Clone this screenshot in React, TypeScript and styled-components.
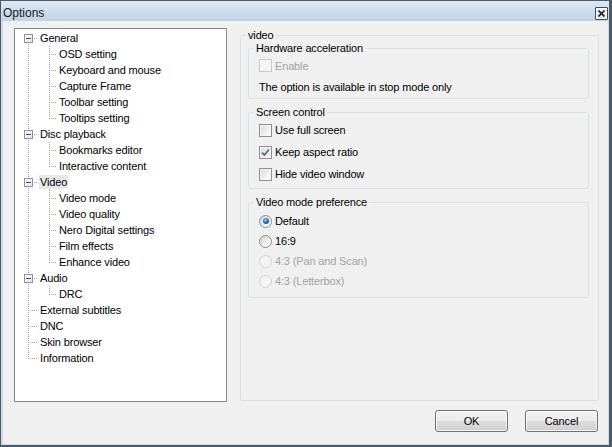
import React from "react";
import styled, { createGlobalStyle } from "styled-components";

const GlobalStyle = createGlobalStyle`
  html, body {
    margin: 0;
    padding: 0;
    background: #fff;
  }
  body {
    font-family: "Liberation Sans", Arial, sans-serif;
    font-size: 11px;
    letter-spacing: -0.15px;
    color: #000;
  }
  * {
    box-sizing: border-box;
  }
`;

const Window = styled.div`
  width: 612px;
  height: 447px;
  display: flex;
  flex-direction: column;
  background: #cedbe9;
  border-style: solid;
  border-color: #4f5a67;
  border-width: 1px 3px 2px 1px;
`;

const TitleBar = styled.div`
  height: 20px;
  flex: none;
  display: flex;
  align-items: center;
  justify-content: space-between;
  padding: 4px 1px 0 2px;
  background: linear-gradient(to bottom, #dde8f3 0%, #cddcec 55%, #c2d3e5 100%);
`;

const Title = styled.span`
  font-size: 12px;
  line-height: 16px;
  letter-spacing: 0;
  color: #1b1b1b;
`;

const CloseButton = styled.span`
  width: 13px;
  height: 13px;
  display: flex;
  align-items: center;
  justify-content: center;
  border: 1px solid #3f4a58;
  border-radius: 1px;
  background: linear-gradient(to bottom, #f7f9fb, #d9e2ec);
  box-shadow: inset 0 0 0 1px #fff;
`;

const Body = styled.div`
  flex: 1;
  display: flex;
  flex-direction: column;
  margin: 0 1px 1px 2px;
  padding: 7px 9px 12px 11px;
  background: #f0f0f0;
`;

const Main = styled.div`
  flex: 1;
  display: flex;
  gap: 13px;
`;

/* ---------- tree ---------- */

const TreeBox = styled.div`
  width: 213px;
  flex: none;
  padding-top: 1px;
  background: #fff;
  border: 1px solid #828790;
`;

const TreeRow = styled.div`
  height: 16px;
  display: flex;
  align-items: center;
`;

type Line = "full" | "top" | "bottom" | "none";

const dotV = "repeating-linear-gradient(to bottom, #a3a3a3 0 1px, transparent 1px 2px)";
const dotH = "repeating-linear-gradient(to right, #a3a3a3 0 1px, transparent 1px 2px)";

const guideLayers = (w: number, at: number, line: Line, branch?: boolean) => {
  const layers: string[] = [];
  if (line === "full") layers.push(`${dotV} ${at}px 0 / 1px 16px no-repeat`);
  if (line === "top") layers.push(`${dotV} ${at}px 0 / 1px 9px no-repeat`);
  if (line === "bottom") layers.push(`${dotV} ${at}px 8px / 1px 8px no-repeat`);
  if (branch) layers.push(`${dotH} ${at}px 8px / ${w - at}px 1px no-repeat`);
  return layers.length ? layers.join(", ") : "none";
};

const Guide = styled.span<{ $w: number; $at: number; $line: Line; $branch?: boolean }>`
  flex: none;
  align-self: stretch;
  width: ${(p) => p.$w}px;
  display: flex;
  align-items: flex-start;
  padding: 4px 0 0 ${(p) => p.$at - 4}px;
  background: ${(p) => guideLayers(p.$w, p.$at, p.$line, p.$branch)};
`;

const Expander = styled.span`
  width: 9px;
  height: 9px;
  display: flex;
  align-items: center;
  justify-content: center;
  border: 1px solid #919191;
  background: linear-gradient(135deg, #ffffff 0%, #e4e4e4 100%);

  &::before {
    content: "";
    width: 5px;
    height: 1px;
    background: #2b4c88;
  }
`;

const NodeLabel = styled.span<{ $selected?: boolean }>`
  margin-left: 1px;
  padding: 0 1px;
  line-height: 14px;
  white-space: nowrap;
  background: ${(p) => (p.$selected ? "#e8e8e8" : "transparent")};
`;

/* ---------- options panel ---------- */

const GroupBox = styled.fieldset<{ $outer?: boolean; $pt?: number; $pb?: number }>`
  margin: ${(p) => (p.$outer ? "1px 0" : "0")};
  min-width: 0;
  flex: ${(p) => (p.$outer ? "1" : "none")};
  border: 1px solid #d5dfe5;
  border-radius: 3px;
  padding: ${(p) => `${p.$pt ?? 0}px ${p.$outer ? 9 : 8}px ${p.$pb ?? 0}px ${p.$outer ? 7 : 10}px`};
`;

const Caption = styled.legend<{ $inset: number }>`
  margin-left: ${(p) => p.$inset}px;
  padding: 0 2px;
  font-size: 11px;
  line-height: 13px;
`;

const Stack = styled.div`
  display: flex;
  flex-direction: column;
  gap: 7px;
`;

const OptionRow = styled.div<{ $h: number; $disabled?: boolean }>`
  height: ${(p) => p.$h}px;
  display: flex;
  align-items: center;
  gap: 3px;
  white-space: nowrap;
  color: ${(p) => (p.$disabled ? "#a2a2a2" : "#000")};
`;

const CheckBox = styled.span<{ $disabled?: boolean }>`
  width: 13px;
  height: 13px;
  flex: none;
  display: flex;
  align-items: center;
  justify-content: center;
  border: 1px solid ${(p) => (p.$disabled ? "#cacaca" : "#8e8f8f")};
  background: ${(p) =>
    p.$disabled ? "#f5f5f5" : "linear-gradient(135deg, #d9d9d9 0%, #eeeeee 55%, #ffffff 100%)"};
  box-shadow: inset 0 0 0 1px ${(p) => (p.$disabled ? "#f5f5f5" : "#f4f4f4")};
`;

const Radio = styled.span<{ $checked?: boolean; $disabled?: boolean }>`
  width: 13px;
  height: 13px;
  flex: none;
  display: flex;
  align-items: center;
  justify-content: center;
  border-radius: 50%;
  border: 1px solid ${(p) => (p.$disabled ? "#d0d0d0" : "#8c8c8c")};
  background: ${(p) =>
    p.$disabled ? "#f3f3f3" : "linear-gradient(135deg, #d2d2d2 0%, #f0f0f0 60%, #ffffff 100%)"};

  &::after {
    content: "";
    display: ${(p) => (p.$checked ? "block" : "none")};
    width: 6px;
    height: 6px;
    border-radius: 50%;
    background: radial-gradient(circle at 40% 35%, #8fd3fb 0%, #1a7ac8 45%, #0a3f78 100%);
  }
`;

/* ---------- buttons ---------- */

const ButtonRow = styled.div`
  display: flex;
  justify-content: flex-end;
  gap: 17px;
  margin: 8px 1px 0 0;
`;

const Button = styled.button`
  width: 73px;
  height: 22px;
  padding: 0;
  font-family: inherit;
  font-size: 11px;
  letter-spacing: inherit;
  color: #000;
  border: 1px solid #707070;
  border-radius: 3px;
  background: linear-gradient(to bottom, #f2f2f2 0%, #ebebeb 50%, #dddddd 51%, #cfcfcf 100%);
  box-shadow: inset 0 0 0 1px rgba(255, 255, 255, 0.75);
`;

type Node = { label: string; selected?: boolean; children?: string[] };

const tree: Node[] = [
  {
    label: "General",
    children: ["OSD setting", "Keyboard and mouse", "Capture Frame", "Toolbar setting", "Tooltips setting"],
  },
  { label: "Disc playback", children: ["Bookmarks editor", "Interactive content"] },
  {
    label: "Video",
    selected: true,
    children: ["Video mode", "Video quality", "Nero Digital settings", "Film effects", "Enhance video"],
  },
  { label: "Audio", children: ["DRC"] },
  { label: "External subtitles" },
  { label: "DNC" },
  { label: "Skin browser" },
  { label: "Information" },
];

const Check = () => (
  <svg width="9" height="9" viewBox="0 0 9 9">
    <path d="M1 4.6 L3.4 7 L8 1.4" fill="none" stroke="#4b5f8d" strokeWidth="1.6" />
  </svg>
);

const OptionsTree = () => (
  <TreeBox>
    {tree.map((node, i) => {
      const last = i === tree.length - 1;
      const line: Line = i === 0 ? "bottom" : last ? "top" : "full";
      return (
        <React.Fragment key={node.label}>
          <TreeRow>
            <Guide $w={23} $at={13} $line={line} $branch>
              {node.children && <Expander />}
            </Guide>
            <NodeLabel $selected={node.selected}>{node.label}</NodeLabel>
          </TreeRow>
          {node.children?.map((child, j) => (
            <TreeRow key={child}>
              <Guide $w={23} $at={13} $line={last ? "none" : "full"} />
              <Guide $w={19} $at={11} $line={j === node.children!.length - 1 ? "top" : "full"} $branch />
              <NodeLabel>{child}</NodeLabel>
            </TreeRow>
          ))}
        </React.Fragment>
      );
    })}
  </TreeBox>
);

const VideoPanel = () => (
  <GroupBox $outer>
    <Caption $inset={-2}>video</Caption>
    <Stack>
      <GroupBox $pb={1}>
        <Caption $inset={-5}>Hardware acceleration</Caption>
        <OptionRow $h={21} $disabled>
          <CheckBox $disabled />
          Enable
        </OptionRow>
        <OptionRow $h={21}>The option is available in stop mode only</OptionRow>
      </GroupBox>

      <GroupBox $pb={3}>
        <Caption $inset={-5}>Screen control</Caption>
        <OptionRow $h={22}>
          <CheckBox />
          Use full screen
        </OptionRow>
        <OptionRow $h={22}>
          <CheckBox>
            <Check />
          </CheckBox>
          Keep aspect ratio
        </OptionRow>
        <OptionRow $h={22}>
          <CheckBox />
          Hide video window
        </OptionRow>
      </GroupBox>

      <GroupBox $pt={2} $pb={6}>
        <Caption $inset={-5}>Video mode preference</Caption>
        <OptionRow $h={20}>
          <Radio $checked />
          Default
        </OptionRow>
        <OptionRow $h={20}>
          <Radio />
          16:9
        </OptionRow>
        <OptionRow $h={20} $disabled>
          <Radio $disabled />
          4:3 (Pan and Scan)
        </OptionRow>
        <OptionRow $h={20} $disabled>
          <Radio $disabled />
          4:3 (Letterbox)
        </OptionRow>
      </GroupBox>
    </Stack>
  </GroupBox>
);

const App = () => (
  <>
    <GlobalStyle />
    <Window>
      <TitleBar>
        <Title>Options</Title>
        <CloseButton>
          <svg width="7" height="7" viewBox="0 0 7 7">
            <path d="M0.5 0.5 L6.5 6.5 M6.5 0.5 L0.5 6.5" stroke="#222" strokeWidth="1.6" />
          </svg>
        </CloseButton>
      </TitleBar>
      <Body>
        <Main>
          <OptionsTree />
          <VideoPanel />
        </Main>
        <ButtonRow>
          <Button>OK</Button>
          <Button>Cancel</Button>
        </ButtonRow>
      </Body>
    </Window>
  </>
);

export default App;
